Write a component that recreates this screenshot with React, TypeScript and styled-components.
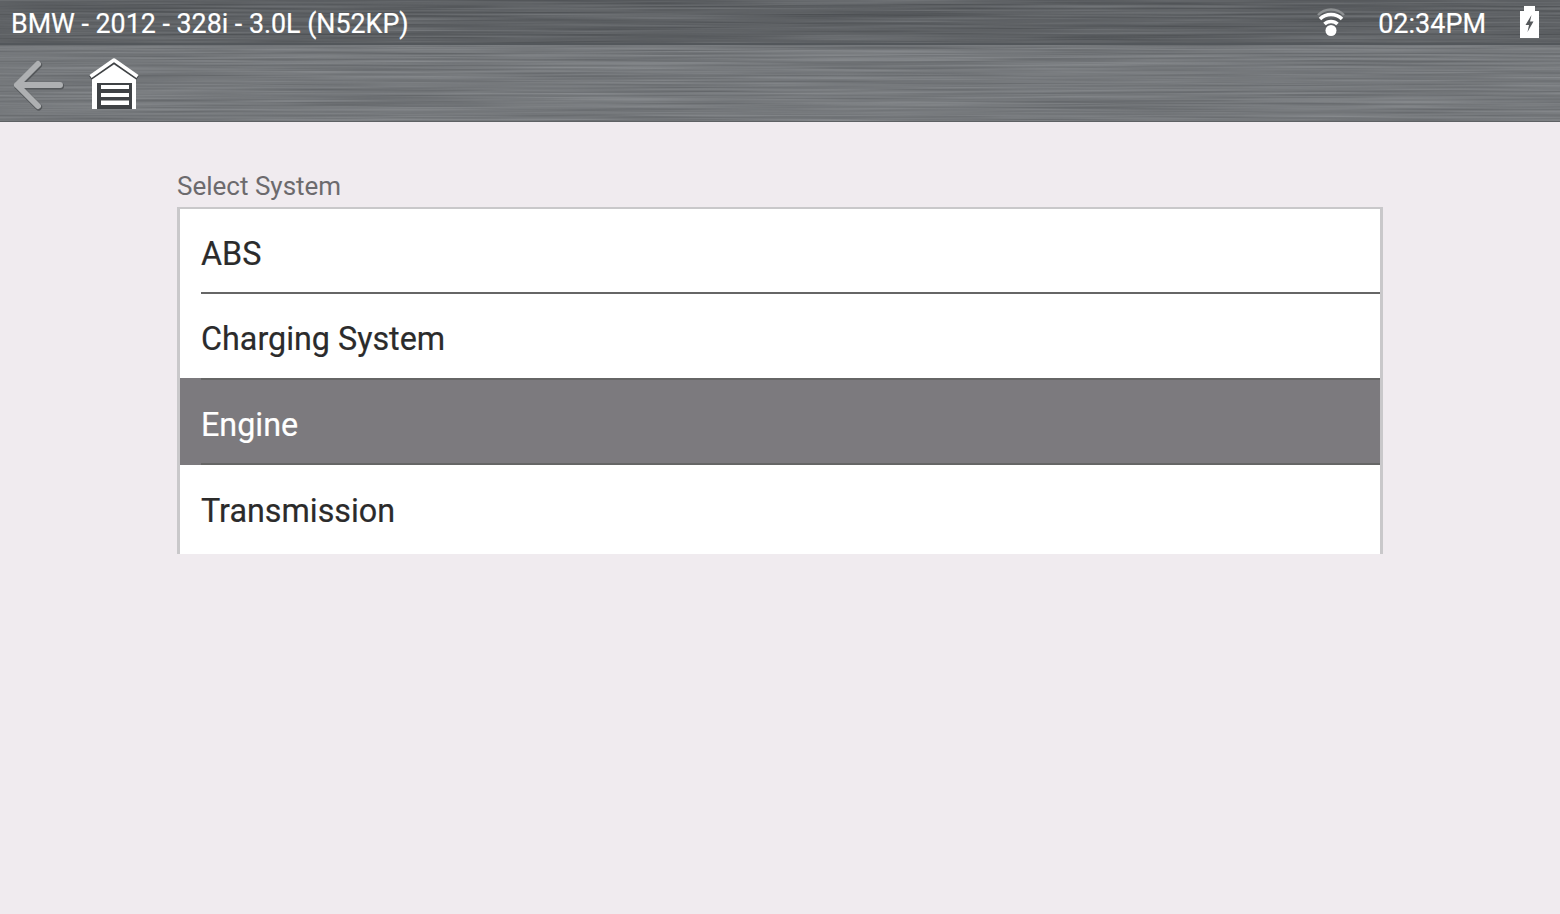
import React from "react"
import styled, { createGlobalStyle } from "styled-components"

const GlobalStyle = createGlobalStyle`
  html, body {
    margin: 0;
    padding: 0;
    background: #f0ebef;
  }
  * {
    box-sizing: border-box;
  }
`

const Page = styled.div`
  width: 1560px;
  height: 914px;
  overflow: hidden;
  display: flex;
  flex-direction: column;
  font-family: Roboto, "Liberation Sans", sans-serif;
`

const StatusBar = styled.header`
  position: relative;
  height: 45px;
  padding: 1px 21px 0 11px;
  display: flex;
  align-items: center;
  background: #5f6468;
  border-bottom: 2px solid #53575b;
  color: #fff;
  overflow: hidden;
`

const Toolbar = styled.nav`
  position: relative;
  height: 77px;
  padding: 3px 0 0 11px;
  display: flex;
  align-items: center;
  gap: 24px;
  background: #74777a;
  border-bottom: 1px solid #5e6164;
  overflow: hidden;
`

const Grain = styled.svg`
  position: absolute;
  inset: 0;
  width: 100%;
  height: 100%;
`

const Title = styled.h1`
  position: relative;
  margin: 3px 0 0;
  flex: 1;
  font-size: 26.8px;
  font-weight: 400;
  line-height: 30px;
  -webkit-text-stroke: 0.2px #fff;
`

const Clock = styled.span`
  position: relative;
  margin: 3px 34px 0 32px;
  font-size: 27px;
  line-height: 30px;
  -webkit-text-stroke: 0.2px #fff;
`

const IconSlot = styled.span`
  position: relative;
  display: flex;
`

const Content = styled.main`
  padding: 48px 177px 0;
`

const Caption = styled.div`
  height: 37px;
  font-size: 26px;
  line-height: 32px;
  color: #6c6a6d;
`

const List = styled.ul`
  margin: 0;
  padding: 0 0 4px;
  list-style: none;
  background: #fff;
  border: 3px solid #c9c8ca;
  border-bottom: 0;
  border-top-width: 2px;
`

const Row = styled.li<{ $selected?: boolean }>`
  height: ${(p) => (p.$selected ? "87.25px" : "85.25px")};
  margin-top: ${(p) => (p.$selected ? "-2px" : "0")};
  padding-left: 21px;
  background: ${(p) => (p.$selected ? "#7c7a7e" : "transparent")};
  color: ${(p) => (p.$selected ? "#fff" : "#2b2b2b")};
`

const RowLabel = styled.div<{ $selected?: boolean; $last?: boolean }>`
  height: 100%;
  padding-top: 7px;
  display: flex;
  align-items: center;
  font-size: 32.3px;
  -webkit-text-stroke: 0.2px ${(p) => (p.$selected ? "#fff" : "#2b2b2b")};
  border-top: ${(p) => (p.$selected ? "2px solid #666" : "0")};
  border-bottom: ${(p) => (p.$last ? "0" : "2px solid #666")};
`

const GrainLayer = ({ id, seed, offset }: { id: string; seed: number; offset: number }) => (
  <Grain aria-hidden="true">
    <filter id={id} x="0" y="0" width="100%" height="100%" colorInterpolationFilters="sRGB">
      <feTurbulence type="fractalNoise" baseFrequency="0.004 0.5" numOctaves={3} seed={seed} />
      <feColorMatrix
        values={`0.2 0 0 0 ${offset}  0.2 0 0 0 ${offset + 0.012}  0.2 0 0 0 ${offset + 0.025}  0 0 0 0 1`}
      />
    </filter>
    <rect width="100%" height="100%" filter={`url(#${id})`} />
  </Grain>
)

const BackIcon = () => (
  <svg width="54" height="54" viewBox="0 0 54 54" fill="none">
    <path
      d="M27 6 L6 27 L27 48 M6 27 H49"
      stroke="#55585b"
      strokeWidth="7"
      strokeLinecap="round"
      strokeLinejoin="round"
      transform="translate(0.6 1)"
    />
    <path
      d="M27 6 L6 27 L27 48 M6 27 H49"
      stroke="#aeb0b2"
      strokeWidth="6"
      strokeLinecap="round"
      strokeLinejoin="round"
    />
  </svg>
)

const HomeIcon = () => (
  <svg width="52" height="54" viewBox="0 0 52 54" fill="none">
    <path d="M1.5 20 L25 3.5 L48.5 20" stroke="#3f4245" strokeWidth="4.5" strokeLinejoin="round" />
    <path d="M1.5 18.5 L25 2 L48.5 18.5" stroke="#fff" strokeWidth="3.5" strokeLinejoin="round" />
    <path d="M3 51 V21.5 L25 6.5 L47 21.5 V51 H43 V25 H8 V51 Z" fill="#fff" />
    <path d="M8 25 H43 V51 H8 Z" fill="#3f4245" />
    <path d="M12 27 H40 V31 H12 Z M12 35 H40 V39 H12 Z M12 42.5 H40 V47 H12 Z" fill="#fff" />
  </svg>
)

const WifiIcon = () => (
  <svg width="30" height="30" viewBox="0 0 30 30" fill="none">
    <path d="M2 8 C9 0.5 21 0.5 28 8" stroke="#8d9092" strokeWidth="2.5" />
    <path d="M4 12 C10 6 20 6 26 12" stroke="#fff" strokeWidth="3.5" />
    <path d="M8.5 17 C12 13.5 18 13.5 21.5 17" stroke="#fff" strokeWidth="3.5" />
    <circle cx="15" cy="23.5" r="5.5" fill="#fff" />
  </svg>
)

const BatteryIcon = () => (
  <svg width="19" height="32" viewBox="0 0 19 32">
    <path d="M4 0 H15 V5 H19 V32 H0 V5 H4 Z" fill="#fff" />
    <path d="M11.5 9 L5.5 19 H9 L7.5 26 L13.5 15.5 H10 Z" fill="#55585b" />
  </svg>
)

const systems = ["ABS", "Charging System", "Engine", "Transmission"]

export default function App() {
  return (
    <Page>
      <GlobalStyle />
      <StatusBar>
        <GrainLayer id="status-grain" seed={4} offset={0.27} />
        <Title>BMW - 2012 - 328i - 3.0L (N52KP)</Title>
        <IconSlot>
          <WifiIcon />
        </IconSlot>
        <Clock>02:34PM</Clock>
        <IconSlot>
          <BatteryIcon />
        </IconSlot>
      </StatusBar>
      <Toolbar>
        <GrainLayer id="toolbar-grain" seed={9} offset={0.36} />
        <IconSlot>
          <BackIcon />
        </IconSlot>
        <IconSlot>
          <HomeIcon />
        </IconSlot>
      </Toolbar>
      <Content>
        <Caption>Select System</Caption>
        <List>
          {systems.map((name, i) => (
            <Row key={name} $selected={name === "Engine"}>
              <RowLabel $selected={name === "Engine"} $last={i === systems.length - 1}>
                {name}
              </RowLabel>
            </Row>
          ))}
        </List>
      </Content>
    </Page>
  )
}
